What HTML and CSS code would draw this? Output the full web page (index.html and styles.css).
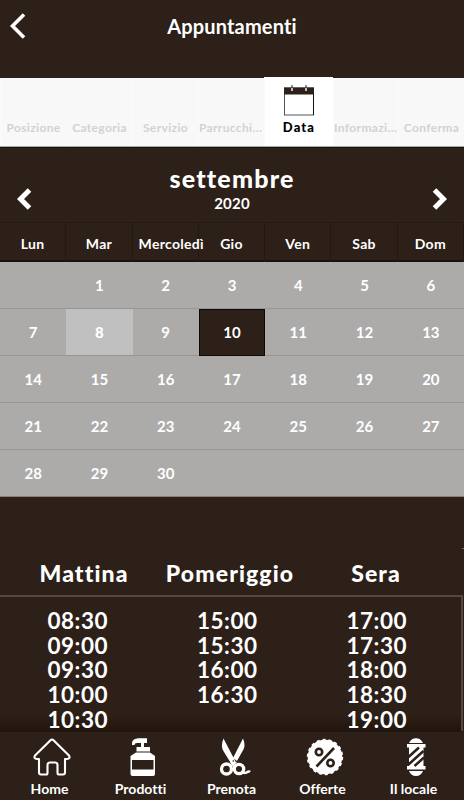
FILE: index.html
```
<!DOCTYPE html>
<html lang="it">
<head>
  <meta charset="utf-8">
  <meta name="viewport" content="width=device-width, initial-scale=1">
  <title>Appuntamenti</title>
  <link rel="stylesheet" href="styles.css">
</head>
<body>
  <div class="app">
    <header class="header">
      <svg class="back" width="16" height="26" viewBox="0 0 16 26"><path d="M14 1.5L2.5 13L14 24.5" fill="none" stroke="#fff" stroke-width="3.6"/></svg>
      <h1>Appuntamenti</h1>
    </header>

    <nav class="steps">
      <div class="step">Posizione</div>
      <div class="step">Categoria</div>
      <div class="step">Servizio</div>
      <div class="step cut">Parrucchi...</div>
      <div class="step active">
        <svg width="30" height="31" viewBox="0 0 30 31">
          <rect x=".5" y="3" width="29" height="27" fill="#fff" stroke="#555"/>
          <path d="M29.5 3V30" stroke="#111"/>
          <rect x="0" y="2.5" width="30" height="7" fill="#2d2019"/>
          <path d="M8 0V3M22 0V3" stroke="#222"/>
          <path d="M8 3V6M22 3V6" stroke="#fff" stroke-width="1.4"/>
        </svg>
        <span>Data</span>
      </div>
      <div class="step cut">Informazi...</div>
      <div class="step">Conferma</div>
    </nav>

    <section class="month">
      <svg width="15" height="22" viewBox="0 0 15 22"><path d="M12.500 2L3.500 11L12.500 20" fill="none" stroke="#fff" stroke-width="5"/></svg>
      <div class="month-title">
        <h2>settembre</h2>
        <p>2020</p>
      </div>
      <svg width="15" height="22" viewBox="0 0 15 22"><path d="M2.500 2L11.500 11L2.500 20" fill="none" stroke="#fff" stroke-width="5"/></svg>
    </section>

    <div class="weekdays">
      <span>Lun</span><span>Mar</span><span class="mercoledi">Mercoledì</span><span>Gio</span><span>Ven</span><span>Sab</span><span>Dom</span>
    </div>

    <div class="days">
      <span></span><span>1</span><span>2</span><span>3</span><span>4</span><span>5</span><span>6</span>
      <span>7</span><span class="today">8</span><span>9</span><span class="selected">10</span><span>11</span><span>12</span><span>13</span>
      <span>14</span><span>15</span><span>16</span><span>17</span><span>18</span><span>19</span><span>20</span>
      <span>21</span><span>22</span><span>23</span><span>24</span><span>25</span><span>26</span><span>27</span>
      <span>28</span><span>29</span><span>30</span><span></span><span></span><span></span><span></span>
    </div>

    <div class="mark"></div>

    <div class="periods">
      <h3>Mattina</h3>
      <h3>Pomeriggio</h3>
      <h3>Sera</h3>
    </div>

    <div class="slots">
      <div class="slot-col"><span>08:30</span><span>09:00</span><span>09:30</span><span>10:00</span><span>10:30</span></div>
      <div class="slot-col"><span>15:00</span><span>15:30</span><span>16:00</span><span>16:30</span></div>
      <div class="slot-col"><span>17:00</span><span>17:30</span><span>18:00</span><span>18:30</span><span>19:00</span></div>
    </div>

    <footer class="tabbar">
      <div class="tab">
        <svg width="38" height="38" viewBox="0 0 38 38"><path d="M19 1.5Q19.8 1.5 20.5 2.2L36 17.5Q37.7 20.8 34 21H32V34.5Q32 36.5 30 36.5H25.5Q24.5 36.5 24.5 35V27Q24.5 24.5 22 24.5H17Q14.5 24.5 14.5 27V35Q14.5 36.5 13 36.5H8Q6 36.5 6 34.5V21H4Q.3 20.8 2 17.5L17.5 2.2Q18.2 1.5 19 1.5Z" fill="none" stroke="#fff" stroke-width="2.1" stroke-linejoin="round"/></svg>
        <span>Home</span>
      </div>
      <div class="tab">
        <svg width="38" height="38" viewBox="0 0 38 38">
          <path d="M8 7Q7 1 14 .3H23V5H20V9H26V13.500H12.500V9H17V5H13Q10.500 5 10.500 7Z" fill="#fff"/>
          <path d="M12 14.500H26L31 18V36Q31 38 29 38H8.500Q6.500 38 6.500 36V18Z" fill="#fff"/>
          <rect x="8" y="22" width="21.500" height="9.500" fill="#2d2019"/>
        </svg>
        <span>Prodotti</span>
      </div>
      <div class="tab">
        <svg width="38" height="38" viewBox="0 0 38 38">
          <path d="M8.500 .5Q5 9 9 14L17 27L21 24.500Z" fill="#fff"/>
          <path d="M28 .5Q31.500 8 27 14L22 23L18 20Z" fill="#fff"/>
          <circle cx="11.500" cy="31" r="5" fill="none" stroke="#fff" stroke-width="3.300"/>
          <circle cx="24" cy="31" r="4.700" fill="none" stroke="#fff" stroke-width="3.300"/>
          <path d="M15 24H22L18 29Z" fill="#fff"/>
          <path d="M27 33Q29 36 31.500 34.500T35 34" fill="none" stroke="#fff" stroke-width="2.600"/>
          <circle cx="18.300" cy="23" r=".8" fill="#2d2019"/>
        </svg>
        <span>Prenota</span>
      </div>
      <div class="tab">
        <svg width="38" height="38" viewBox="0 0 38 38">
          <circle cx="19" cy="19" r="17.300" fill="#fff"/>
          <circle cx="19" cy="19" r="16.700" fill="none" stroke="#fff" stroke-width="3" stroke-dasharray="3 2.829"/>
          <g fill="none" stroke="#2d2019" stroke-width="2.600">
            <path d="M28 10L10.500 28.500"/>
            <circle cx="13" cy="14" r="3.200"/>
            <circle cx="24.500" cy="25" r="3.200"/>
          </g>
        </svg>
        <span>Offerte</span>
      </div>
      <div class="tab">
        <svg width="38" height="38" viewBox="0 0 38 38">
          <path d="M12 5Q14 .3 19 .3T26 5ZM12 33Q14 38 19 38T26 33Z" fill="#fff"/>
          <path d="M10 6H28.500V9.500H10ZM10 28H28.500V31.500H10Z" fill="#fff"/>
          <path d="M12 9H26.500V28H12Z" fill="#fff"/>
          <path d="M11.500 19L22 9.500M11.500 26.500L26.500 13M17.500 28L27 19.500" stroke="#2d2019" stroke-width="2.500"/>
        </svg>
        <span>Il locale</span>
      </div>
    </footer>
  </div>
</body>
</html>
```
FILE: styles.css
```
* {
  box-sizing: border-box;
}

body {
  margin: 0;
  background-color: #2d2019;
  color: #fff;
  font-family: Lato, "Liberation Sans", sans-serif;
  font-weight: bold;
  font-variant-ligatures: none;
}

h1, h2, h3, p {
  margin: 0;
}

.app {
  display: flex;
  flex-direction: column;
  height: 800px;
  overflow: hidden;
}

.header {
  display: grid;
  grid-template-columns: 40px 1fr 40px;
  height: 78px;
  padding-top: 13px;
}

.back {
  margin-left: 10px;
}

h1 {
  font-size: 20px;
  line-height: 26px;
  letter-spacing: .15px;
  text-align: center;
}

.steps {
  display: grid;
  grid-template-columns: repeat(4, 66px) 69px 65px 66px;
  width: 464px;
  height: 69px;
  background-color: #f8f8f8;
  border-bottom: 1px solid #aaa;
}

.step {
  padding-top: 41px;
  border-left: 1px solid #fbfbfb;
  color: #d2d2d2;
  font-size: 12px;
  line-height: 18px;
  letter-spacing: .35px;
  text-align: center;
  white-space: nowrap;
}

.step.cut {
  padding-right: 4px;
}

.step.active {
  display: flex;
  flex-direction: column;
  align-items: center;
  margin-top: -1px;
  padding-top: 8px;
  background-color: #fff;
  color: #000;
  font-size: 13px;
  font-weight: 900;
  letter-spacing: 1.1px;
}

.step.active span {
  margin-top: 2px;
}

.month {
  display: flex;
  justify-content: space-between;
  height: 75px;
  padding: 18px 17px 0;
  border-top: 1px solid #17100c;
}

.month > svg {
  margin-top: 22px;
}

.month-title {
  text-align: center;
}

h2 {
  margin-top: -2px;
  font-size: 25px;
  font-weight: 900;
  line-height: 28px;
  letter-spacing: 1.2px;
}

.month-title p {
  margin-top: 1px;
  font-size: 15px;
  line-height: 20px;
  letter-spacing: .2px;
}

.weekdays, .days {
  display: grid;
  grid-template-columns: repeat(7, 1fr);
}

.weekdays {
  height: 40px;
  border-top: 1px solid #261a14;
  border-bottom: 2px solid #17100c;
}

.weekdays span {
  min-width: 0;
  border-right: 1px solid #241812;
  font-size: 14px;
  line-height: 42px;
  letter-spacing: .3px;
  text-align: center;
}

.weekdays span.mercoledi {
  padding-left: 6px;
}

.days {
  height: 236px;
  grid-template-rows: repeat(5, 1fr);
  background-color: #acabaa;
}

.days span {
  display: flex;
  align-items: center;
  justify-content: center;
  border-bottom: 1px solid #979695;
  font-size: 15px;
}

.days span:nth-last-child(-n+7) {
  border-bottom-color: #88816e;
}

.days .today {
  background-color: #c0c0c0;
  font-weight: 900;
}

.days .selected {
  background-color: #2d2019;
  border: 1px solid #0d0805;
}

.mark {
  align-self: flex-end;
  width: 2px;
  height: 1px;
  margin-top: 51px;
  background-color: #75685f;
}

.periods {
  display: grid;
  grid-template-columns: repeat(3, 146px);
  padding: 8px 0 0 11px;
  height: 46px;
}

h3 {
  font-size: 23px;
  font-weight: 900;
  line-height: 32px;
  letter-spacing: 1.1px;
  text-align: center;
}

.slots {
  display: grid;
  grid-template-columns: repeat(3, 149.500px);
  width: 463px;
  height: 136px;
  padding: 12px 0 0 3px;
  border-top: 2px solid #54473f;
  border-right: 2px solid #54473f;
  background: linear-gradient(transparent 118px, #1f130c 136px);
}

.slot-col {
  display: flex;
  flex-direction: column;
  align-items: center;
  font-size: 22.500px;
  line-height: 24.700px;
  letter-spacing: .5px;
}

.tabbar {
  display: grid;
  grid-template-columns: repeat(5, 91px);
  flex-shrink: 0;
  height: 69px;
  padding: 7px 0 0 4px;
  background-color: #2d2019;
  border-top: 1px solid #21150f;
}

.tab {
  display: flex;
  flex-direction: column;
  align-items: center;
  font-size: 14px;
  line-height: 18px;
}

.tab svg {
  margin: -1px 0 4px 5px;
}
```
